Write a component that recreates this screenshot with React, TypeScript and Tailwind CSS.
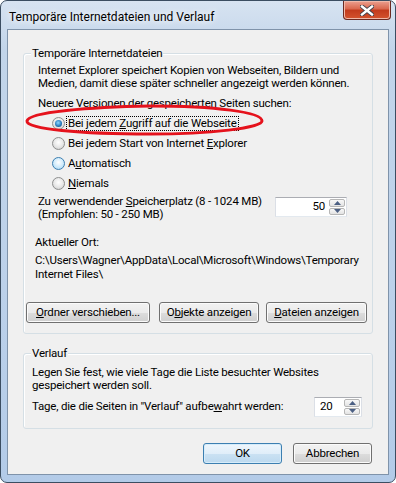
import React from 'react';

const FONT = "font-['Segoe_UI','Roboto',sans-serif]";

function Radio({ checked, hover }: { checked?: boolean; hover?: boolean }) {
  return (
    <span
      className={`flex h-[13px] w-[13px] shrink-0 items-center justify-center rounded-full border ${
        hover
          ? 'border-[#3c7fb1] bg-[radial-gradient(circle_at_50%_40%,#ffffff_0%,#cdeafb_55%,#9ccfee_100%)]'
          : 'border-[#8e8f8f] bg-[radial-gradient(circle_at_50%_40%,#ffffff_0%,#e6e6e6_55%,#c4c4c4_100%)]'
      }`}
    >
      {checked && (
        <span className="h-[7px] w-[7px] rounded-full bg-[radial-gradient(circle_at_45%_40%,#8fd6ff_0%,#2a7fc0_55%,#0c3a66_100%)]" />
      )}
    </span>
  );
}

function Btn({ children, primary, className }: { children: React.ReactNode; primary?: boolean; className: string }) {
  return (
    <button
      className={`flex h-[21px] items-center justify-center whitespace-nowrap rounded-[3px] border text-black ${
        primary
          ? 'border-[#3c7fb1] bg-[linear-gradient(#eef6fc_0%,#e0eef9_50%,#cbe2f3_50%,#bcd9ef_100%)] shadow-[inset_0_0_0_1px_#d6ecfa]'
          : 'border-[#707070] bg-[linear-gradient(#f2f2f2_0%,#ebebeb_50%,#dddddd_50%,#cfcfcf_100%)] shadow-[inset_0_0_0_1px_#fbfbfb]'
      } ${className}`}
    >
      {children}
    </button>
  );
}

function Arrow({ up }: { up?: boolean }) {
  return (
    <svg width="7" height="4" viewBox="0 0 7 4">
      {up ? <path d="M0 4 L3.5 0 L7 4 Z" fill="#4b5f83" /> : <path d="M0 0 L3.5 4 L7 0 Z" fill="#4b5f83" />}
    </svg>
  );
}

function Spin({ value, wide }: { value: string; wide?: boolean }) {
  return (
    <div
      className={`flex h-[20px] border border-[#abadb3] border-b-[#e3e9ef] border-x-[#dbdfe6] bg-white ${
        wide ? 'w-[72px]' : 'w-[48px]'
      }`}
    >
      <div className={`flex flex-1 items-center ${wide ? 'justify-end pr-[4px]' : 'pl-[5px]'}`}>{value}</div>
      <div className="flex w-[17px] flex-col gap-[1px] py-[1px] pr-[1px]">
        <div className="flex flex-1 items-center justify-center rounded-[2px] border border-[#b6b6b6] bg-[linear-gradient(#f8f8f8,#e3e3e3)]">
          <Arrow up />
        </div>
        <div className="flex flex-1 items-center justify-center rounded-[2px] border border-[#b6b6b6] bg-[linear-gradient(#f8f8f8,#e3e3e3)]">
          <Arrow />
        </div>
      </div>
    </div>
  );
}

export default function App() {
  return (
    <div className={`relative h-[483px] w-[396px] ${FONT} whitespace-nowrap text-[11.5px] tracking-[-0.2px] text-black`}>
      <div className="flex h-full w-full flex-col rounded-[7px] border border-[#3b4d61] bg-[linear-gradient(180deg,#d7e3f1_0%,#c2d5ea_10%,#bcd1ea_60%,#b3cbe8_100%)]">
        {/* title bar */}
        <div className="flex h-[28px] shrink-0">
          <div className="ml-[8px] pt-[9px] text-[12px] leading-[15px] tracking-normal [text-shadow:0_0_6px_#ffffff,0_0_10px_#ffffff]">
            Temporäre Internetdateien und Verlauf
          </div>
          <div className="ml-auto mr-[4px] flex h-[19px] w-[48px] items-center justify-center rounded-b-[4px] border border-t-0 border-[#6b2a22] bg-[linear-gradient(#eca090_0%,#d9664c_45%,#c23a1c_50%,#d4532e_100%)] shadow-[inset_0_0_0_1px_#f0b8a8]">
            <svg width="14" height="11" viewBox="0 0 14 11">
              <path d="M2 1.5 L12 9.5 M12 1.5 L2 9.5" stroke="#3f3f4a" strokeWidth="4.2" strokeLinecap="square" />
              <path d="M2 1.5 L12 9.5 M12 1.5 L2 9.5" stroke="#ffffff" strokeWidth="2.4" strokeLinecap="square" />
            </svg>
          </div>
        </div>

        {/* client area */}
        <div className="mx-[6px] flex h-[446px] flex-col border border-[#7f93aa] bg-[#f0f0f0]">
          {/* group 1 */}
          <div className="ml-[15px] mt-[23px] flex h-[281px] w-[350px] flex-col rounded-[3px] border border-[#d5dfe5] shadow-[inset_1px_1px_0_#ffffff]">
            <div className="-mt-[8px] ml-[7px] w-fit bg-[#f0f0f0] px-[1px] leading-[15px]">Temporäre Internetdateien</div>
            <div className="ml-[14px] mt-[3px] leading-[13px]">
              Internet Explorer speichert Kopien von Webseiten, Bildern und
              <br />
              Medien, damit diese später schneller angezeigt werden können.
            </div>
            <div className="ml-[14px] mt-[7px] leading-[13px]">Neuere Versionen der gespeicherten Seiten suchen:</div>
            <div className="ml-[28px] mt-[3px] flex flex-col">
              <div className="flex h-[20px] items-center">
                <Radio checked />
                <span className="ml-[1px] border border-dotted border-black px-[1px] leading-[13px]">
                  Bei jedem <span className="underline">Z</span>ugriff auf die Webseite
                </span>
              </div>
              <div className="flex h-[20px] items-center">
                <Radio />
                <span className="ml-[3px] leading-[13px]">
                  Bei jedem Start von Internet <span className="underline">E</span>xplorer
                </span>
              </div>
              <div className="flex h-[20px] items-center">
                <Radio hover />
                <span className="ml-[3px] leading-[13px]">
                  A<span className="underline">u</span>tomatisch
                </span>
              </div>
              <div className="flex h-[20px] items-center">
                <Radio />
                <span className="ml-[3px] leading-[13px]">
                  <span className="underline">N</span>iemals
                </span>
              </div>
            </div>
            <div className="mt-[2px] flex">
              <div className="ml-[14px] leading-[13px]">
                Zu verwendender <span className="underline">S</span>peicherplatz (8 - 1024 MB)
                <br />
                (Empfohlen: 50 - 250 MB)
              </div>
              <div className="ml-auto mr-[25px] mt-[2px]">
                <Spin value="50" wide />
              </div>
            </div>
            <div className="ml-[11px] mt-[15px] leading-[13px]">Aktueller Ort:</div>
            <div className="ml-[11px] mt-[4px] leading-[14px]">
              C:\Users\Wagner\AppData\Local\Microsoft\Windows\Temporary
              <br />
              Internet Files\
            </div>
            <div className="ml-[2px] mt-[21px] flex">
              <Btn className="w-[124px]">
                <span className="underline">O</span>rdner verschieben...
              </Btn>
              <Btn className="ml-[9px] w-[100px]">
                O<span className="underline">b</span>jekte anzeigen
              </Btn>
              <Btn className="ml-[7px] w-[101px]">
                <span className="underline">D</span>ateien anzeigen
              </Btn>
            </div>
          </div>

          {/* group 2 */}
          <div className="ml-[15px] mt-[19px] flex h-[76px] w-[350px] flex-col rounded-[3px] border border-[#d5dfe5] shadow-[inset_1px_1px_0_#ffffff]">
            <div className="-mt-[8px] ml-[7px] w-fit bg-[#f0f0f0] px-[1px] leading-[15px]">Verlauf</div>
            <div className="ml-[8px] mt-[5px] leading-[13px]">
              Legen Sie fest, wie viele Tage die Liste besuchter Websites
              <br />
              gespeichert werden soll.
            </div>
            <div className="mt-[5px] flex h-[20px] items-center">
              <div className="ml-[8px]">
                Tage, die die Seiten in "Verlauf" aufbe<span className="underline">w</span>ahrt werden:
              </div>
              <div className="ml-auto mr-[10px]">
                <Spin value="20" />
              </div>
            </div>
          </div>

          {/* dialog buttons */}
          <div className="mt-[14px] flex">
            <Btn primary className="ml-[195px] w-[79px]">
              OK
            </Btn>
            <Btn className="ml-[11px] w-[79px]">Abbrechen</Btn>
          </div>
        </div>
      </div>

      {/* red marker ellipse drawn over the dialog */}
      <svg className="pointer-events-none absolute left-0 top-0" width="396" height="483" viewBox="0 0 396 483">
        <path
          d="M27 121 C 28 112, 90 107, 150 106 C 215 106, 262 112, 262 121 C 262 128, 210 134, 150 134 C 80 134, 26 129, 27 121 Z"
          fill="none"
          stroke="#e5121c"
          strokeWidth="3"
        />
      </svg>
    </div>
  );
}
